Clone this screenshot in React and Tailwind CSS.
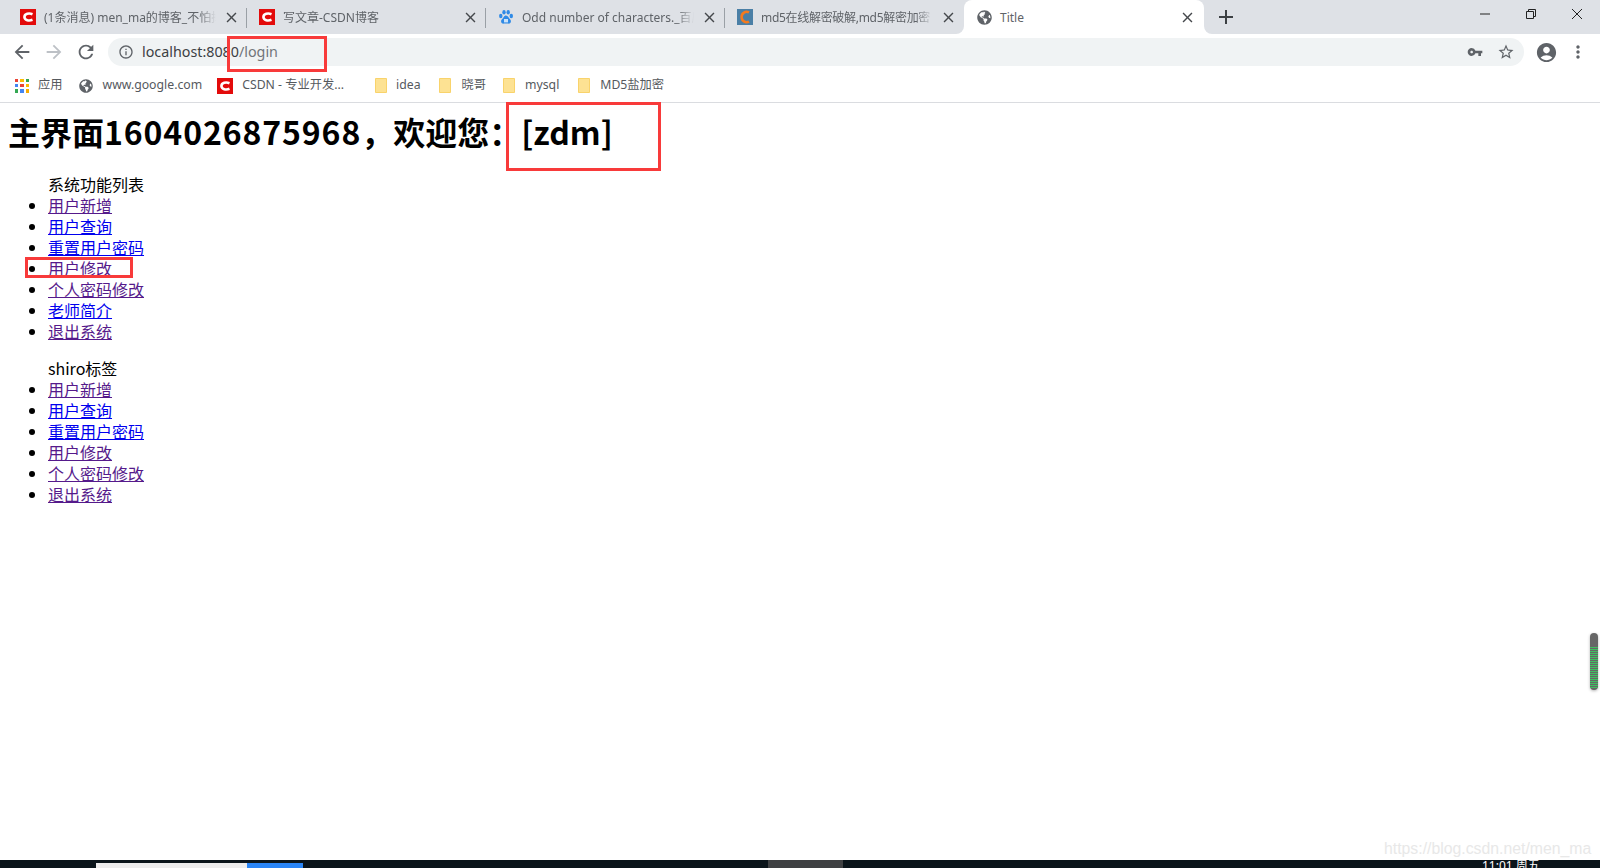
import React from 'react';
import { FaGlobeAmericas } from 'react-icons/fa';
import { MdArrowBack, MdArrowForward, MdRefresh, MdInfoOutline, MdVpnKey, MdStarBorder, MdAccountCircle, MdMoreVert, MdClose, MdAdd } from 'react-icons/md';

const uiFont = '[font-family:"Noto_Sans","Noto_Sans_CJK_SC",sans-serif]';

const CsdnIcon = () => (
  <svg width="16" height="16" viewBox="0 0 16 16" className="shrink-0">
    <rect width="16" height="16" fill="#e30b0b" />
    <path d="M12.5 5.2 C9 3.8 4.6 4.6 4.4 8 C4.6 11.4 9 12.2 12.5 10.8" fill="none" stroke="#fff" strokeWidth="2.6" />
  </svg>
);

const BaiduIcon = () => (
  <svg width="16" height="16" viewBox="0 0 16 16" className="shrink-0">
    <ellipse cx="2.8" cy="7" rx="1.7" ry="2.2" fill="#2f8ae6" />
    <ellipse cx="6" cy="3.2" rx="1.7" ry="2.3" fill="#2f8ae6" />
    <ellipse cx="10.2" cy="3.2" rx="1.7" ry="2.3" fill="#2f8ae6" />
    <ellipse cx="13.3" cy="7" rx="1.7" ry="2.2" fill="#2f8ae6" />
    <path d="M8 6.5 C5.8 6.5 5.6 9 3.9 10.3 C2.2 12 3.2 15 6 14.6 C7.2 14.4 8.8 14.4 10 14.6 C12.8 15 13.8 12 12.1 10.3 C10.4 9 10.2 6.5 8 6.5 Z" fill="#2f8ae6" />
    <rect x="6" y="10" width="4" height="3.4" fill="#fff" opacity="0.75" />
  </svg>
);

const Md5Icon = () => (
  <svg width="16" height="16" viewBox="0 0 16 16" className="shrink-0">
    <rect width="16" height="16" fill="#4a7fa6" />
    <path d="M12 3.4 C8.5 1.6 4.6 4 4.6 8 C4.6 12 8.5 14.4 12 12.6" fill="none" stroke="#f47a1f" strokeWidth="2.6" />
  </svg>
);

const Tab = ({ icon, title, separator, titleClass = '' }) => (
  <div className="relative flex h-full w-[239px] shrink-0 items-center pl-3">
    {icon}
    <div className={`ml-2 w-[172px] overflow-hidden whitespace-nowrap pt-px text-xs text-[#5f6368] [mask-image:linear-gradient(to_right,black_90%,transparent)] ${titleClass}`}>
      {title}
    </div>
    <MdClose className="ml-[7px] text-[#45484c]" size={17} />
    {separator && <div className="absolute right-0 top-2 h-[20px] w-px bg-[#9aa0a6]" />}
  </div>
);

const Folder = () => (
  <svg width="12" height="15" viewBox="0 0 12 15" className="shrink-0">
    <path d="M0.5 0.5 H11.5 V14.5 H0.5 Z" fill="#fde293" stroke="#f9d36b" />
  </svg>
);

const AppsIcon = () => {
  const colors = ['#ea4335', '#fbbc04', '#34a853', '#4285f4', '#ea4335', '#fbbc04', '#34a853', '#4285f4', '#f9ab00'];
  return (
    <div className="grid h-[14px] w-[14px] shrink-0 grid-cols-3 gap-[2px]">
      {colors.map((c, i) => (
        <span key={i} className="block" style={{ backgroundColor: c }} />
      ))}
    </div>
  );
};

const Bookmark = ({ icon, label, className }) => (
  <div className={`flex items-center ${className}`}>
    {icon}
    <span className="whitespace-nowrap text-[12.25px] text-[#55595e]">{label}</span>
  </div>
);

const NavItem = ({ label, visited }) => (
  <li className="h-[21px]">
    <a href="#" className={`underline ${visited ? 'text-[#551a8b]' : 'text-[#0000ee]'}`}>{label}</a>
  </li>
);

export default function App() {
  return (
    <div className={`relative flex h-[868px] w-[1600px] flex-col overflow-hidden bg-white ${uiFont}`}>
      {/* tab strip */}
      <div className="flex h-[34px] shrink-0 bg-white">
        <div className="flex w-[964px] shrink-0 rounded-br-lg bg-[#dee1e6] pl-2">
          <Tab icon={<CsdnIcon />} title="(1条消息) men_ma的博客_不怕掉头发的博客" separator />
          <Tab icon={<CsdnIcon />} title="写文章-CSDN博客" separator />
          <Tab icon={<BaiduIcon />} title="Odd number of characters._百度搜索" separator />
          <Tab icon={<Md5Icon />} title="md5在线解密破解,md5解密加密" titleClass="tracking-[-0.3px]" />
        </div>
        <div className="w-[240px] shrink-0 bg-[#dee1e6]">
          <div className="flex h-full items-center rounded-t-lg bg-white pl-[13px]">
            <FaGlobeAmericas className="text-[#5f6368]" size={15} />
            <span className="ml-2 w-[172px] pt-px text-xs text-[#5f6368]">Title</span>
            <MdClose className="ml-[7px] text-[#45484c]" size={17} />
          </div>
        </div>
        <div className="flex flex-1 items-start rounded-bl-lg bg-[#dee1e6]">
          <MdAdd className="ml-[10px] mt-[5px] text-[#3c4043]" size={24} />
          <div className="ml-auto flex h-7 items-center pr-[18px]">
            <svg width="10" height="10" viewBox="0 0 10 10" className="mr-9">
              <path d="M0 5 H10" stroke="#222" strokeWidth="1" />
            </svg>
            <svg width="10" height="10" viewBox="0 0 10 10" className="mr-9">
              <path d="M0.5 2.5 H7.5 V9.5 H0.5 Z M2.5 2.5 V0.5 H9.5 V7.5 H7.5" fill="none" stroke="#222" strokeWidth="1" />
            </svg>
            <svg width="10" height="10" viewBox="0 0 10 10">
              <path d="M0 0 L10 10 M10 0 L0 10" stroke="#222" strokeWidth="1" />
            </svg>
          </div>
        </div>
      </div>

      {/* toolbar */}
      <div className="flex h-[34px] shrink-0 items-center bg-white pt-[2px]">
        <MdArrowBack className="ml-[11px] text-[#5f6368]" size={22} />
        <MdArrowForward className="ml-[10px] text-[#bdc1c6]" size={22} />
        <MdRefresh className="ml-[10px] text-[#5f6368]" size={22} />
        <div className="ml-[11px] flex h-[28px] w-[1416px] items-center rounded-full bg-[#f0f3f4] pl-[10px] pr-[9px]">
          <MdInfoOutline className="text-[#5f6368]" size={16} />
          <span className="ml-[8px] text-[14.3px] text-[#3c4043]">
            localhost:8080<span className="text-[#70757a]">/login</span>
          </span>
          <MdVpnKey className="ml-auto text-[#5f6368]" size={16} />
          <MdStarBorder className="ml-[14px] text-[#5f6368]" size={18} />
        </div>
        <MdAccountCircle className="ml-[11px] text-[#5f6368]" size={23} />
        <MdMoreVert className="ml-[10px] text-[#5f6368]" size={20} />
      </div>

      {/* bookmarks bar */}
      <div className="flex h-[35px] shrink-0 items-center border-b border-[#dadce0] bg-white pt-px">
        <Bookmark className="ml-[15px] gap-[9px]" icon={<AppsIcon />} label="应用" />
        <Bookmark className="ml-4 gap-[10px]" icon={<FaGlobeAmericas className="text-[#5f6368]" size={14} />} label="www.google.com" />
        <Bookmark className="ml-[15px] gap-[9px]" icon={<CsdnIcon />} label="CSDN - 专业开发..." />
        <Bookmark className="ml-[31px] gap-[9px]" icon={<Folder />} label="idea" />
        <Bookmark className="ml-[18px] gap-[11px]" icon={<Folder />} label="晓哥" />
        <Bookmark className="ml-[17px] gap-[10px]" icon={<Folder />} label="mysql" />
        <Bookmark className="ml-[19px] gap-[10px]" icon={<Folder />} label="MD5盐加密" />
      </div>

      {/* page body */}
      <div className="flex-1 overflow-hidden px-2 [font-family:'Noto_Sans_CJK_SC',sans-serif] text-base leading-[21px] text-black">
        <h1 className="mt-[9px] h-[38px] whitespace-nowrap text-[32px] font-bold leading-[38px]">
          主界面<span className="tracking-[0.9px]">1604026875968</span>，欢迎您：[zdm]
        </h1>
        <ul className="mt-6 list-disc pl-10">
          <div className="h-[21px]">系统功能列表</div>
          <NavItem label="用户新增" visited />
          <NavItem label="用户查询" />
          <NavItem label="重置用户密码" />
          <NavItem label="用户修改" visited />
          <NavItem label="个人密码修改" visited />
          <NavItem label="老师简介" />
          <NavItem label="退出系统" visited />
        </ul>
        <ul className="mt-[16px] list-disc pl-10">
          <div className="h-[21px]">shiro标签</div>
          <NavItem label="用户新增" visited />
          <NavItem label="用户查询" />
          <NavItem label="重置用户密码" />
          <NavItem label="用户修改" visited />
          <NavItem label="个人密码修改" visited />
          <NavItem label="退出系统" visited />
        </ul>
      </div>

      {/* taskbar sliver */}
      <div className="flex h-2 shrink-0 overflow-hidden bg-[#0a141a]">
        <div className="ml-24 mt-[3px] h-[5px] w-[151px] bg-[#ececec]" />
        <div className="mt-[3px] h-[5px] w-[56px] bg-[#2a85f5]" />
        <div className="ml-[465px] h-2 w-[75px] bg-[#3f4143]" />
        <div className="ml-[639px] whitespace-nowrap text-xs leading-[12px] text-white">11:01 周五</div>
      </div>

      {/* annotations drawn over the screenshot */}
      <div className="absolute left-[227px] top-[36px] h-[36px] w-[100px] border-[3px] border-[#f83a3a]" />
      <div className="absolute left-[506px] top-[102px] h-[69px] w-[155px] border-[3px] border-[#f83a3a]" />
      <div className="absolute left-[25px] top-[257px] h-[21px] w-[108px] border-[3px] border-[#f83a3a]" />

      {/* floating volume widget */}
      <div className="absolute left-[1590px] top-[633px] h-[57px] w-2 overflow-hidden rounded-full bg-[#666] pt-[14px] shadow-[0_1px_3px_rgba(0,0,0,0.3)]">
        <div className="h-[41px] bg-[repeating-linear-gradient(to_bottom,#3fbf60_0,#3fbf60_1px,#666_1px,#666_2px)]" />
      </div>

      {/* watermark */}
      <div className="absolute left-[1384px] top-[839px] text-[15.8px] leading-[20px] text-[#e8e8e8] [font-family:'Liberation_Sans',sans-serif]">
        https://blog.csdn.net/men_ma
      </div>
    </div>
  );
}
